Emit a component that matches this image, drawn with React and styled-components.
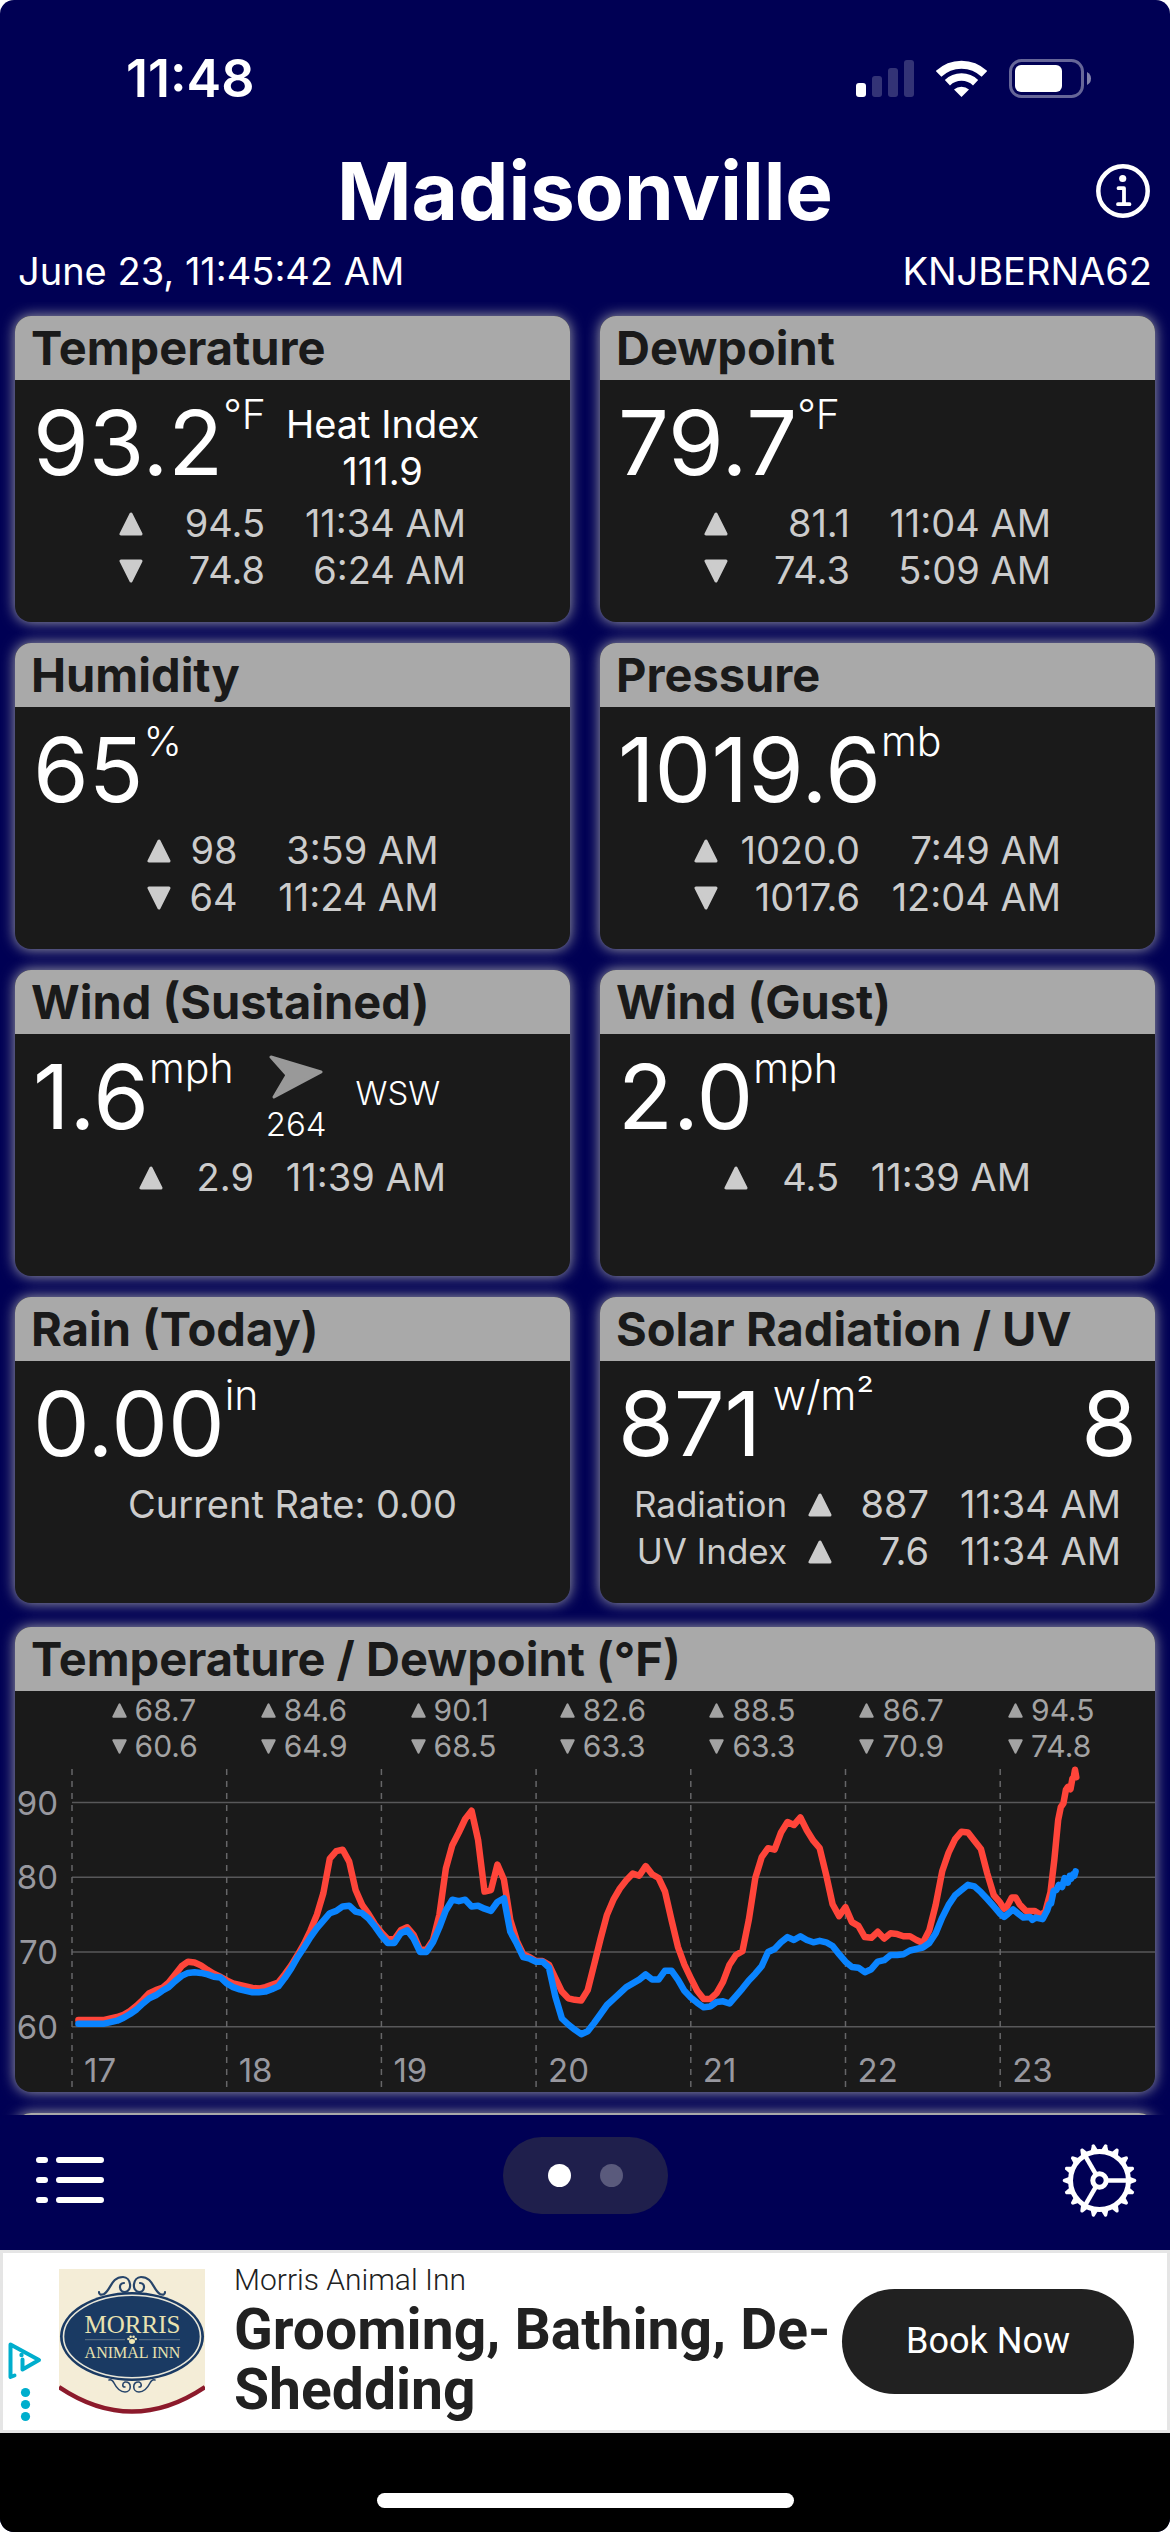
import React from "react";
import styled, { ThemeProvider, createGlobalStyle } from "styled-components";

const theme = {
  navy: "#000054",
  pill: "#1f1f4c",
  card: "#1a1a1a",
  cardHead: "#a9a9a9",
  text: "#fff",
  subText: "#ccc",
  chartText: "#a3a3a3",
  axisText: "#98989f",
  hot: "#ff453a",
  dew: "#0a84ff",
  adInk: "#212121",
  adBlue: "#00aecd",
  head: "64px",
  row: "47px",
};

const GlobalStyle = createGlobalStyle`
  * {
    box-sizing: border-box;
  }

  html {
    background: #fff;
  }

  body {
    margin: 0;
    font-family: Inter, "Liberation Sans", sans-serif;
  }

  h1, h2, p {
    margin: 0;
  }

  button {
    padding: 0;
    border: 0;
    background: none;
    color: inherit;
    font: inherit;
    cursor: pointer;
  }

  svg {
    display: block;
  }
`;

const Page = styled.div`
  height: 100vh;
  display: flex;
  flex-direction: column;
  overflow: hidden;
  border-radius: 14px;
  background: ${(props) => props.theme.navy};
  color: ${(props) => props.theme.text};
`;

const StatusBar = styled.div`
  height: 156px;
  flex-shrink: 0;
  display: flex;
  align-items: center;
  justify-content: space-between;
  padding: 0 78px 0 126px;
`;

const Clock = styled.span`
  font-size: 52px;
  font-weight: 600;
`;

const StatusIcons = styled.div`
  display: flex;
  align-items: center;
  gap: 22px;
`;

const TitleRow = styled.header`
  display: grid;
  grid-template-columns: 1fr auto 1fr;
  align-items: center;
  padding: 0 20px;
`;

const Title = styled.h1`
  grid-column: 2;
  font-size: 80px;
  font-weight: 700;
  line-height: 70px;
`;

const InfoButton = styled.button`
  justify-self: end;
`;

const StationRow = styled.div`
  display: flex;
  justify-content: space-between;
  padding: 21px 18px 7px;
  font-size: 38px;
  line-height: 48px;
`;

const Scroller = styled.main`
  flex: 1;
  min-height: 0;
  overflow: hidden;
  padding: 14px 15px 0;
`;

const Cards = styled.div`
  display: grid;
  grid-template-columns: 1fr 1fr;
  gap: 21px 30px;
  margin-bottom: 24px;
`;

const CardBox = styled.section`
  overflow: hidden;
  margin-bottom: ${(props) => (props.$spaced ? "21px" : 0)};
  border-radius: 16px;
  background: ${(props) => props.theme.card};
  box-shadow: 0 0 14px ${(props) => props.theme.cardHead};
`;

const CardTitle = styled.h2`
  height: ${(props) => props.theme.head};
  padding: 0 16px;
  background: ${(props) => props.theme.cardHead};
  color: ${(props) => props.theme.card};
  font-size: 47px;
  font-weight: 700;
  line-height: 64px;
  white-space: nowrap;
`;

const CardBody = styled.div`
  min-height: 242px;
`;

const Reading = styled.div`
  height: 120px;
  display: flex;
  padding: 0 18px;
`;

const Value = styled.span`
  font-size: 90px;
  line-height: 126px;
  margin-left: ${(props) => (props.$end ? "auto" : 0)};
`;

const Unit = styled.span`
  font-size: 41px;
  font-weight: 300;
  line-height: 68px;
  white-space: pre;
`;

const HeatIndex = styled.div`
  padding: 21px 0 0 20px;
  font-size: 38px;
  line-height: ${(props) => props.theme.row};
  text-align: center;
`;

const Wind = styled.div`
  display: flex;
  gap: 29px;
  padding: 21px 0 0 32px;
  font-size: 33px;
  font-weight: 300;
`;

const Heading = styled.div`
  display: flex;
  flex-direction: column;
  align-items: center;
  gap: 5px;
  line-height: 40px;
`;

const Compass = styled.span`
  line-height: 76px;
`;

const Extremes = styled.table`
  margin: 0 auto;
  border-collapse: collapse;
  color: ${(props) => props.theme.subText};
  font-size: 38px;
  line-height: ${(props) => props.theme.row};
  text-align: right;
  white-space: nowrap;

  td {
    padding: 0;
  }
`;

const RowLabel = styled.th`
  padding: 0 21px 0 0;
  font-size: 35px;
  font-weight: 400;
`;

const Cell = styled.td`
  width: ${(props) => props.$width}px;
`;

const Rate = styled.p`
  color: ${(props) => props.theme.subText};
  font-size: 38px;
  line-height: ${(props) => props.theme.row};
  text-align: center;
`;

const DayRanges = styled.div`
  display: grid;
  grid-template-columns: repeat(7, 1fr);
  padding: 1px 29px 0 65px;
  color: ${(props) => props.theme.chartText};
  font-size: 30px;
  line-height: 36px;
`;

const DayRange = styled.div`
  display: grid;
  grid-template-columns: auto auto;
  justify-content: center;
  align-items: center;
  column-gap: 8px;
`;

const ChartSvg = styled.svg`
  width: 100%;
  height: auto;

  text {
    fill: ${(props) => props.theme.axisText};
    font-size: 33px;
  }
`;

const TabBar = styled.nav`
  height: 135px;
  flex-shrink: 0;
  display: grid;
  grid-template-columns: 1fr auto 1fr;
  align-items: center;
  padding: 0 33px 5px;
`;

const TabButton = styled.button`
  justify-self: ${(props) => (props.$end ? "end" : "start")};
`;

const Pager = styled.div`
  display: flex;
  align-items: center;
  gap: 29px;
  margin-bottom: 9px;
  height: 77px;
  padding: 0 45px;
  border-radius: 39px;
  background: ${(props) => props.theme.pill};
`;

const Dot = styled.button`
  width: 23px;
  height: 23px;
  border-radius: 50%;
  background: ${(props) => (props.$active ? "#fff" : "#5a5a7c")};
`;

const Ad = styled.aside`
  height: 183px;
  flex-shrink: 0;
  display: flex;
  align-items: center;
  padding: 0 33px 0 5px;
  border: 3px solid #e5e5e5;
  background: #fff;
  color: ${(props) => props.theme.adInk};
  font-family: Roboto, "Liberation Sans", sans-serif;
`;

const AdMarks = styled.button`
  align-self: flex-end;
  margin: 0 17px 8px 0;
`;

const AdText = styled.div`
  flex: 1;
  padding: 0 4px 4px 29px;
`;

const Advertiser = styled.p`
  font-size: 30px;
  font-weight: 300;
  line-height: 40px;
`;

const Headline = styled.p`
  font-size: 57px;
  font-weight: 700;
  line-height: 60px;
`;

const BookButton = styled.a`
  flex-shrink: 0;
  width: 292px;
  border-radius: 53px;
  background: ${(props) => props.theme.adInk};
  color: #fff;
  font-size: 36px;
  line-height: 105px;
  text-align: center;
  text-decoration: none;
`;

const HomeArea = styled.div`
  height: 99px;
  flex-shrink: 0;
  display: flex;
  justify-content: center;
  align-items: flex-end;
  padding-bottom: 24px;
  background: #000;
`;

const HomeBar = styled.div`
  width: 417px;
  height: 15px;
  border-radius: 8px;
  background: #fff;
`;

// hourly readings, starting at 1 AM on the 17th
const hotHours = [
  60.9, 60.9, 60.9, 60.9, 60.9, 61.1, 61.3, 61.6, 62.1, 62.8, 63.6, 64.5, 64.9,
  65.2, 65.9, 67, 68.1, 68.7, 68.6, 68.2, 67.6, 67.1, 66.7, 66.2, 65.8, 65.6,
  65.4, 65.2, 65.1, 65.3, 65.6, 65.9, 67, 68.2, 69.6, 71.1, 72.9, 75, 77.9,
  82.5, 83.5, 83.7, 82.1, 78.3, 76.3, 75.1, 73.7, 72.6, 71.7, 71.7, 72.9, 73.3,
  72.3, 70.3, 70.3, 71.6, 75, 81.2, 84.3, 86, 87.8, 88.9, 85, 78.1, 78.3, 81.7,
  79.7, 74.3, 71.5, 69.7, 69.3, 68.8, 68.8, 68.3, 66.5, 64.7, 63.8, 63.6, 63.5,
  64.9, 68.3, 71.8, 75, 77, 78.5, 79.6, 80.5, 80.2, 81.5, 80.4, 79.9, 78.1,
  74.3, 70.7, 68.3, 66.5, 64.8, 63.7, 63.7, 64.5, 66, 68.3, 69.6, 70.1, 74.3,
  79.9, 82.7, 83.9, 83.7, 86, 87.4, 87, 88, 86.3, 84.9, 83.9, 80.3, 76.4, 74.8,
  76, 74, 73.5, 72, 71.9, 72.7, 71.8, 72.5, 72.4, 72.1, 72.1, 71.6, 71.2, 72.9,
  76.3, 80.8, 83.3, 85.1, 86.1, 86, 84.9, 83.8, 80.5, 77.6, 76.6,
];

const dewHours = [
  60.4, 60.4, 60.4, 60.4, 60.4, 60.6, 60.8, 61.2, 61.7, 62.3, 63.1, 63.8, 64.2,
  64.8, 65.3, 66.1, 66.8, 67.2, 67.3, 67.2, 67, 66.7, 66.6, 65.8, 65.3, 65,
  64.8, 64.6, 64.6, 64.7, 65, 65.4, 66.5, 67.8, 69.3, 70.6, 72, 73.2, 74.2,
  75.2, 75.5, 76.1, 76.2, 75.4, 75.2, 74.5, 73.4, 72.2, 71.2, 71.2, 72.5, 72.9,
  71.8, 70, 70, 71.3, 73.3, 75.6, 77, 76.8, 77, 76.1, 76.2, 75.8, 75.5, 76.7,
  77.2, 72.7, 71.1, 69.3, 69.1, 68.7, 68.7, 67.9, 64, 61.1, 60.3, 59.6, 59,
  59.4, 60.5, 61.7, 62.9, 63.7, 64.5, 65.3, 65.8, 66.3, 67, 66.3, 66.3, 67.5,
  67.5, 66.3, 64.8, 63.9, 63.2, 62.6, 62.7, 63.3, 63.4, 63.1, 64.1, 65.1, 66.2,
  67.1, 68.1, 70, 70.4, 71.3, 72, 71.6, 72.1, 71.6, 71.3, 71.5, 71.3, 70.8,
  69.7, 68.7, 68, 67.9, 67.3, 67.7, 68.7, 68.9, 69.6, 69.6, 69.7, 70.2, 70.4,
  70.6, 71.2, 72.5, 74.6, 76.3, 77.6, 78.3, 79, 78.8, 78, 77.1, 76.1, 75.1,
];

// [hour, reading] for the last day, which reports more often
const hotRecent = [
  [144.6, 75.8], [145, 76], [145.8, 77.3], [146.4, 77.3], [147, 76.4],
  [148, 75.5], [149.3, 75.5], [150.3, 75], [151, 75.4], [151.8, 78],
  [152.4, 82.3], [153, 87.7], [153.4, 89.4], [153.8, 89.9], [154.2, 91.7],
  [154.5, 92.1], [154.9, 91.8], [155.2, 93.2], [155.4, 93.4], [155.6, 94.4],
  [155.8, 93.4],
];

const dewRecent = [
  [144.6, 74.7], [145.2, 75.1], [146, 75.7], [147, 75], [147.6, 74.6],
  [148.6, 74.7], [149, 74.3], [149.5, 74.6], [150.6, 74.4], [151.3, 75.6],
  [151.6, 76.4], [151.9, 76.5], [152.3, 78.2], [152.7, 78.3], [153.1, 79],
  [153.6, 78.7], [154, 79.9], [154.5, 79.3], [154.8, 80.2], [155, 79.8],
  [155.3, 80.4], [155.5, 80.2], [155.7, 80.8],
];

const days = [
  { day: 17, high: "68.7", low: "60.6" },
  { day: 18, high: "84.6", low: "64.9" },
  { day: 19, high: "90.1", low: "68.5" },
  { day: 20, high: "82.6", low: "63.3" },
  { day: 21, high: "88.5", low: "63.3" },
  { day: 22, high: "86.7", low: "70.9" },
  { day: 23, high: "94.5", low: "74.8" },
];

const chartX = (hour) => 57 + (hour * 154.7) / 24;
const chartY = (degrees) => 188 - (degrees - 70) * 7.47;

const toPoints = (hours, recent) =>
  [...hours.map((value, i) => [i + 1, value]), ...recent]
    .map(([hour, value]) => `${chartX(hour).toFixed(1)},${chartY(value).toFixed(1)}`)
    .join(" ");

function Arrow({ down, size = 24 }) {
  return (
    <svg width={size} height={size} viewBox="0 0 24 24" aria-hidden="true">
      <path
        d={down ? "M2 2h20L12 22z" : "M2 22h20L12 2z"}
        fill="currentColor"
        stroke="currentColor"
        strokeWidth="3"
        strokeLinejoin="round"
      />
    </svg>
  );
}

function Card({ title, children, spaced }) {
  return (
    <CardBox $spaced={spaced}>
      <CardTitle>{title}</CardTitle>
      {children}
    </CardBox>
  );
}

// rows: [isLow, value, time, label]
function Range({ rows, valueWidth, timeWidth }) {
  return (
    <Extremes>
      <tbody>
        {rows.map(([down, value, time, label]) => (
          <tr key={label || value}>
            {label && <RowLabel scope="row">{label}</RowLabel>}
            <td>
              <Arrow down={down} />
            </td>
            <Cell $width={valueWidth}>{value}</Cell>
            <Cell $width={timeWidth}>{time}</Cell>
          </tr>
        ))}
      </tbody>
    </Extremes>
  );
}

function SignalIcons() {
  return (
    <StatusIcons>
      <svg width="58" height="37" viewBox="0 0 58 37" fill="#fff" aria-hidden="true">
        <rect y="23" width="10" height="14" rx="3" />
        <g opacity="0.2">
          <rect x="16" y="16" width="10" height="21" rx="3" />
          <rect x="32" y="8" width="10" height="29" rx="3" />
          <rect x="48" width="10" height="37" rx="3" />
        </g>
      </svg>
      <svg width="51" height="37" viewBox="0 0 51 37" fill="none" stroke="#fff" strokeWidth="8" aria-hidden="true">
        <path d="M2.6 13.9A33 33 0 0 1 48.4 13.9" />
        <path d="M11.4 22.7A20.5 20.5 0 0 1 39.6 22.7" strokeWidth="7.5" />
        <path d="M25.5 37 18 29.6A11 11 0 0 1 33 29.6z" fill="#fff" stroke="none" />
      </svg>
      <svg width="83" height="39" viewBox="0 0 83 39" aria-hidden="true">
        <rect x="1.5" y="1.5" width="72" height="36" rx="11" fill="none" stroke="#fff" strokeOpacity="0.4" strokeWidth="3" />
        <rect x="6" y="6" width="47" height="27" rx="6" fill="#fff" />
        <path d="M78 13q4 2 4 6.5t-4 6.5z" fill="#fff" opacity="0.5" />
      </svg>
    </StatusIcons>
  );
}

function InfoIcon() {
  return (
    <svg width="54" height="54" viewBox="0 0 54 54" fill="none" stroke="#fff" aria-hidden="true">
      <circle cx="27" cy="27" r="24.7" strokeWidth="4.5" />
      <circle cx="26.7" cy="14.5" r="3.6" fill="#fff" stroke="none" />
      <path d="M22.5 24.2H28V40M22 40.2h11.5" strokeWidth="3.8" strokeLinecap="round" strokeLinejoin="round" />
    </svg>
  );
}

function GearIcon() {
  const teeth = Array.from({ length: 18 }, (_, i) => i * 20);

  return (
    <svg width="75" height="75" viewBox="-37.5 -37.5 75 75" fill="none" stroke="#fff" aria-hidden="true">
      <circle r="29" strokeWidth="5" />
      <circle r="6.7" strokeWidth="5" />
      {teeth.map((angle) => (
        <path key={angle} d="M30-3.8 36-1.4Q37.6 0 36 1.4L30 3.8z" fill="#fff" stroke="none" transform={`rotate(${angle})`} />
      ))}
      {[0, 120, 240].map((angle) => (
        <path key={angle} d="M8 0H28" strokeWidth="4.5" transform={`rotate(${angle})`} />
      ))}
    </svg>
  );
}

function MorrisLogo() {
  return (
    <svg width="146" height="145" viewBox="0 0 146 145" aria-hidden="true">
      <path d="M0 0h146v118Q73 166 0 118z" fill="#f4edd7" />
      <path d="M0 118Q73 167 146 118" fill="none" stroke="#8c1a2b" strokeWidth="4.5" />
      <g fill="none" stroke="#27456a" strokeWidth="2.2" strokeLinecap="round">
        {["", "translate(146 0) scale(-1 1)"].map((flip) => (
          <g key={flip} transform={flip}>
            <path d="M40 23q0 4 5 2C52 21 52 8 64 8c8 0 10 14 2 15-6 0-7-9-1-9" />
            <path d="M50 111q3-1 5 3c3 6 6 9 11 9 7 0 7-11 0-10-3 1-3 5 0 5" strokeWidth="1.6" />
          </g>
        ))}
      </g>
      <ellipse cx="73" cy="67.5" rx="72" ry="44.5" fill="#1a3a63" />
      <ellipse cx="73" cy="67.5" rx="68.5" ry="41.2" fill="none" stroke="#e8e6d8" strokeWidth="1.6" />
      <path d="M26 70.7h40M80 70.7h41" stroke="#5f7488" strokeWidth="1" />
      <g fill="#f1e9b6">
        <ellipse cx="73" cy="72.5" rx="3" ry="2.4" />
        <circle cx="69.5" cy="70" r="1.3" />
        <circle cx="71.6" cy="67.8" r="1.3" />
        <circle cx="74.6" cy="67.8" r="1.3" />
        <circle cx="76.7" cy="70" r="1.3" />
      </g>
      <g fill="#e9e2b0" fontFamily="Liberation Serif, serif" textAnchor="middle">
        <text x="73.5" y="64" fontSize="25">MORRIS</text>
        <text x="73.5" y="89" fontSize="16">ANIMAL INN</text>
      </g>
    </svg>
  );
}

function TemperatureChart() {
  return (
    <ChartSvg viewBox="0 0 1140 328" role="img" aria-label="Temperature / Dewpoint (°F)">
      {[90, 80, 70, 60].map((degrees) => (
        <g key={degrees}>
          <path d={`M57 ${chartY(degrees)}H1140`} stroke="#58585a" strokeWidth="1.5" />
          <text x="43" y={chartY(degrees) + 12} textAnchor="end">{degrees}</text>
        </g>
      ))}
      {days.map(({ day }, i) => (
        <g key={day}>
          <path d={`M${chartX(i * 24)} 5V323`} stroke="#666668" strokeWidth="1.5" strokeDasharray="6 6" />
          <text x={chartX(i * 24) + 12} y="318">{day}</text>
        </g>
      ))}
      <g fill="none" strokeWidth="6.5" strokeLinejoin="round" strokeLinecap="round">
        <polyline points={toPoints(hotHours, hotRecent)} stroke={theme.hot} />
        <polyline points={toPoints(dewHours, dewRecent)} stroke={theme.dew} />
      </g>
    </ChartSvg>
  );
}

function App() {
  return (
    <ThemeProvider theme={theme}>
      <GlobalStyle />
      <Page>
        <StatusBar>
          <Clock>11:48</Clock>
          <SignalIcons />
        </StatusBar>
        <TitleRow>
          <Title>Madisonville</Title>
          <InfoButton aria-label="Info">
            <InfoIcon />
          </InfoButton>
        </TitleRow>
        <StationRow>
          <span>June 23, 11:45:42 AM</span>
          <span>KNJBERNA62</span>
        </StationRow>

        <Scroller>
          <Cards>
            <Card title="Temperature">
              <CardBody>
                <Reading>
                  <Value>93.2</Value>
                  <Unit>°F</Unit>
                  <HeatIndex>
                    Heat Index
                    <br />
                    111.9
                  </HeatIndex>
                </Reading>
                <Range
                  valueWidth={122}
                  timeWidth={201}
                  rows={[
                    [false, "94.5", "11:34 AM"],
                    [true, "74.8", "6:24 AM"],
                  ]}
                />
              </CardBody>
            </Card>
            <Card title="Dewpoint">
              <CardBody>
                <Reading>
                  <Value>79.7</Value>
                  <Unit>°F</Unit>
                </Reading>
                <Range
                  valueWidth={122}
                  timeWidth={201}
                  rows={[
                    [false, "81.1", "11:04 AM"],
                    [true, "74.3", "5:09 AM"],
                  ]}
                />
              </CardBody>
            </Card>
            <Card title="Humidity">
              <CardBody>
                <Reading>
                  <Value>65</Value>
                  <Unit>%</Unit>
                </Reading>
                <Range
                  valueWidth={67}
                  timeWidth={201}
                  rows={[
                    [false, "98", "3:59 AM"],
                    [true, "64", "11:24 AM"],
                  ]}
                />
              </CardBody>
            </Card>
            <Card title="Pressure">
              <CardBody>
                <Reading>
                  <Value>1019.6</Value>
                  <Unit>mb</Unit>
                </Reading>
                <Range
                  valueWidth={142}
                  timeWidth={201}
                  rows={[
                    [false, "1020.0", "7:49 AM"],
                    [true, "1017.6", "12:04 AM"],
                  ]}
                />
              </CardBody>
            </Card>
            <Card title="Wind (Sustained)">
              <CardBody>
                <Reading>
                  <Value>1.6</Value>
                  <Unit>mph</Unit>
                  <Wind>
                    <Heading>
                      <svg width="54" height="44" viewBox="0 0 54 44" aria-hidden="true">
                        <path
                          d="M2 2 52 17 5 42 18 20z"
                          fill="#999"
                          stroke="#999"
                          strokeWidth="3"
                          strokeLinejoin="round"
                        />
                      </svg>
                      264
                    </Heading>
                    <Compass>WSW</Compass>
                  </Wind>
                </Reading>
                <Range valueWidth={91} timeWidth={192} rows={[[false, "2.9", "11:39 AM"]]} />
              </CardBody>
            </Card>
            <Card title="Wind (Gust)">
              <CardBody>
                <Reading>
                  <Value>2.0</Value>
                  <Unit>mph</Unit>
                </Reading>
                <Range valueWidth={91} timeWidth={192} rows={[[false, "4.5", "11:39 AM"]]} />
              </CardBody>
            </Card>
            <Card title="Rain (Today)">
              <CardBody>
                <Reading>
                  <Value>0.00</Value>
                  <Unit>in</Unit>
                </Reading>
                <Rate>Current Rate: 0.00</Rate>
              </CardBody>
            </Card>
            <Card title="Solar Radiation / UV">
              <CardBody>
                <Reading>
                  <Value>871</Value>
                  <Unit>{" w/m²"}</Unit>
                  <Value $end>8</Value>
                </Reading>
                <Range
                  valueWidth={97}
                  timeWidth={192}
                  rows={[
                    [false, "887", "11:34 AM", "Radiation"],
                    [false, "7.6", "11:34 AM", "UV Index"],
                  ]}
                />
              </CardBody>
            </Card>
          </Cards>

          <Card title="Temperature / Dewpoint (°F)" spaced>
            <DayRanges>
              {days.map(({ day, high, low }) => (
                <DayRange key={day}>
                  <Arrow size={15} />
                  <span>{high}</span>
                  <Arrow size={15} down />
                  <span>{low}</span>
                </DayRange>
              ))}
            </DayRanges>
            <TemperatureChart />
          </Card>
          <Card />
        </Scroller>

        <TabBar>
          <TabButton aria-label="Stations">
            <svg width="75" height="48" viewBox="0 0 75 48" stroke="#fff" strokeWidth="6" strokeLinecap="round" aria-hidden="true">
              <path d="M6 4h6M26 4h42M6 24h6M26 24h42M6 44h6M26 44h42" />
            </svg>
          </TabButton>
          <Pager>
            <Dot aria-label="Page 1" $active />
            <Dot aria-label="Page 2" />
          </Pager>
          <TabButton aria-label="Settings" $end>
            <GearIcon />
          </TabButton>
        </TabBar>

        <Ad>
          <AdMarks aria-label="Ad choices">
            <svg width="34" height="80" viewBox="0 0 34 80" fill="none" stroke={theme.adBlue} aria-hidden="true">
              <path d="M6.5 33.5 2.5 35V2.5L31 18 14.5 27.5V17.5" strokeWidth="4" strokeLinejoin="round" strokeLinecap="round" />
              <g fill={theme.adBlue} stroke="none">
                <circle cx="13.5" cy="13" r="2.2" />
                <circle cx="17.5" cy="50.5" r="4.6" />
                <circle cx="17.5" cy="62.5" r="4.6" />
                <circle cx="17.5" cy="74.5" r="4.6" />
              </g>
            </svg>
          </AdMarks>
          <MorrisLogo />
          <AdText>
            <Advertiser>Morris Animal Inn</Advertiser>
            <Headline>Grooming, Bathing, De-Shedding</Headline>
          </AdText>
          <BookButton href="#book">Book Now</BookButton>
        </Ad>

        <HomeArea>
          <HomeBar />
        </HomeArea>
      </Page>
    </ThemeProvider>
  );
}

export default App;
